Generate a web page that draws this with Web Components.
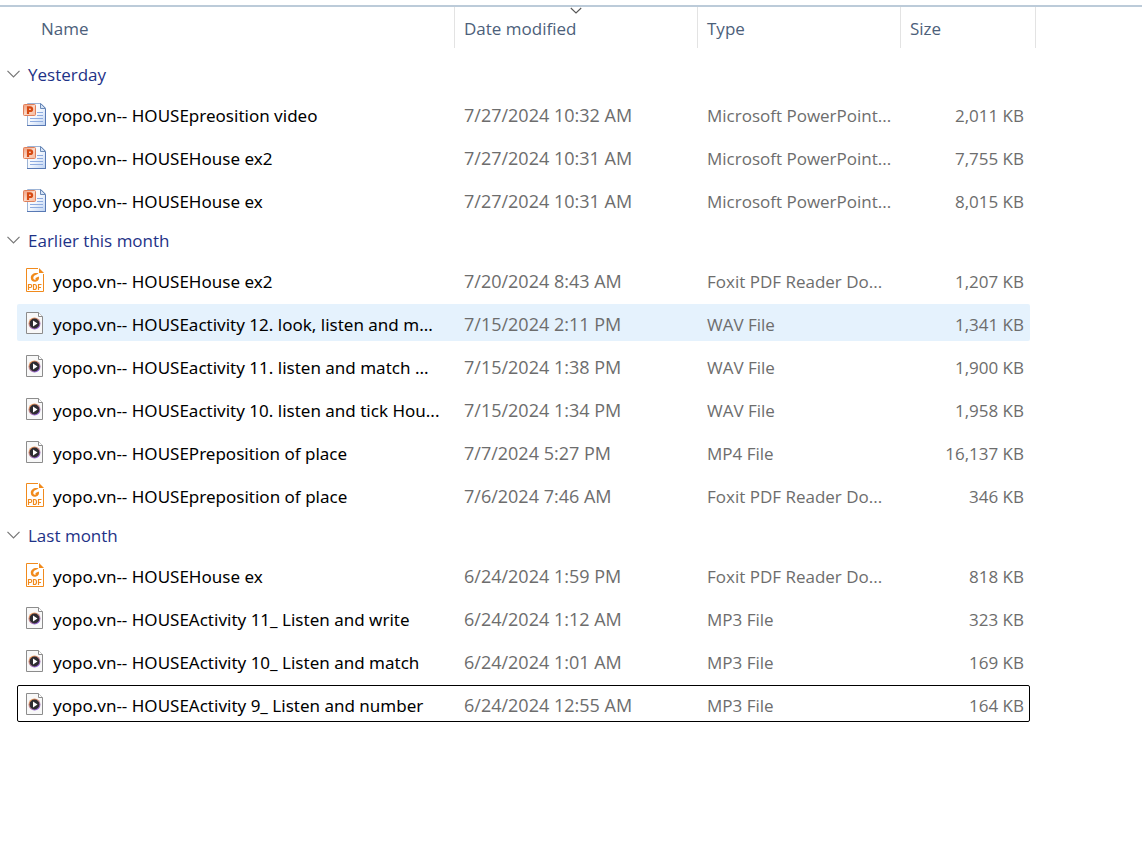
<!DOCTYPE html>
<html lang="en">
<head>
<meta charset="utf-8">
<title>Files</title>
<style>
body { margin: 0; background: #fff; font-family: "Open Sans", "Noto Sans", sans-serif; font-size: 17px; line-height: 24px; color: #000; }
</style>
</head>
<body>
<file-pane><file-list></file-list></file-pane>

<template id="icon-ppt">
  <svg viewBox="0 0 24 24" width="24" height="24" aria-hidden="true">
    <defs>
      <linearGradient id="sheet" x1="0" y1="0" x2="1" y2="1"><stop offset="0" stop-color="#fff"/><stop offset=".5" stop-color="#f4f8fe"/><stop offset="1" stop-color="#bdd2f2"/></linearGradient>
      <linearGradient id="badge" x1="0" y1="0" x2="1" y2="1"><stop offset="0" stop-color="#ef9a78"/><stop offset=".5" stop-color="#fbd9c8"/><stop offset="1" stop-color="#f6b698"/></linearGradient>
    </defs>
    <g transform="translate(0 1)">
      <path d="M4.500 .5H18L22.500 5V22.500H4.500Z" fill="url(#sheet)" stroke="#9db4d6"/>
      <path d="M17.500 .5V5.500H22.500Z" fill="#d5e3f6" stroke="#6b8ab8"/>
      <path d="M14 9.500H20M14 12.500H20M7 15.500H20M7 18.500H20" stroke="#8eabdf"/>
      <path d="M4 22.500H23M22.500 6V22" stroke="#5879b4"/>
      <rect x=".5" y="1.500" width="12" height="11" rx="1" fill="url(#badge)" stroke="#e0805a"/>
      <path d="M5 11V4.300H7C9.800 4.300 9.800 8 7 8H5" fill="none" stroke="#d64a12" stroke-width="2.200"/>
    </g>
  </svg>
</template>
<template id="icon-pdf">
  <svg viewBox="0 0 24 24" width="24" height="24" aria-hidden="true">
    <path d="M15 .5H3.500V23.500H20.500V6" fill="#fff" stroke="#f18a1c"/>
    <path d="M16 0V5H21Z" fill="#f18a1c"/>
    <path d="M15.500 5.200C11 4.200 7.800 6.500 7.800 9.800C7.800 13 10.500 14.500 13.200 13.600C15.600 12.800 16.600 10.500 15.800 8.600L12 10.200C13.200 10.300 13.300 11.600 12 11.700C10 11.900 9.700 8.800 11.600 7.500C12.800 6.700 14.500 6.500 15.500 5.200Z" fill="#f18a1c"/>
    <path d="M5.500 22V16.500H7.500Q8.700 16.500 8.700 18Q8.700 19.500 7.500 19.500H5.500M10.500 16.500V21.500H11.700Q13.500 21.500 13.500 19Q13.500 16.500 11.700 16.500ZM15.500 22V16.500H18.500M15.500 19.500H18" fill="none" stroke="#f18a1c" stroke-width="1.200"/>
  </svg>
</template>
<template id="icon-media">
  <svg viewBox="0 0 24 24" width="24" height="24" aria-hidden="true">
    <defs><linearGradient id="ring" x1="0" y1="0" x2=".6" y2="1"><stop offset="0" stop-color="#ff9b3d"/><stop offset=".5" stop-color="#c98b86"/><stop offset="1" stop-color="#8e62d6"/></linearGradient></defs>
    <path d="M3.500 1.500H15.500L19.500 5.500V22.500H3.500Z" fill="#f8f8f8" stroke="#8c8c8c"/>
    <path d="M15.500 1.500V5.500H19.500" fill="#fff" stroke="#8c8c8c"/>
    <circle cx="11.500" cy="12.500" r="6" fill="url(#ring)"/>
    <circle cx="11.500" cy="12.500" r="4.900" fill="#2d2b31"/>
    <path d="M10 9.500V15.500L14.500 12.500Z" fill="#fff"/>
  </svg>
</template>

<script>
class FilePane extends HTMLElement {
  constructor() {
    super();
    this.attachShadow({ mode: 'open' }).innerHTML = `
      <style>
        :host { display: block; padding-top: 5px; }
        main { border-top: 2px solid #bccbd9; }
      </style>
      <main><slot></slot></main>`;
  }
}

class FileIcon extends HTMLElement {
  connectedCallback() {
    if (this.shadowRoot) return;
    const root = this.attachShadow({ mode: 'open' });
    root.innerHTML = '<style>:host { display: block; flex: none; width: 24px; height: 24px; } svg { display: block; }</style>';
    root.append(document.getElementById('icon-' + this.getAttribute('kind')).content.cloneNode(true));
  }
}

class GroupHeading extends HTMLElement {
  constructor() {
    super();
    this.attachShadow({ mode: 'open' }).innerHTML = `
      <style>
        :host { display: block; }
        button { display: flex; align-items: center; gap: 8px; height: 37px; padding: 0 0 0 7px; border: 0; background: none; font: inherit; color: #1e3287; }
        svg { display: block; }
        span { padding-top: 2px; }
      </style>
      <button type="button" aria-expanded="true">
        <svg width="13" height="8" viewBox="0 0 13 8" aria-hidden="true"><path d="M.5 .8L6.500 6.800L12.500 .8" fill="none" stroke="#777" stroke-width="1.200"/></svg>
        <span><slot></slot></span>
      </button>`;
  }
}

class ColumnHeading extends HTMLElement {
  constructor() {
    super();
    this.attachShadow({ mode: 'open' }).innerHTML = `
      <style>
        :host { display: block; position: relative; }
        button { display: block; width: 100%; height: 41px; padding: 2px 0 0 var(--inset, 9px); border: 0; background: none; font: inherit; color: #4c607a; text-align: left; }
        svg { display: none; position: absolute; top: 0; left: 50%; transform: translateX(-50%); }
        :host([sorted]) svg { display: block; }
      </style>
      <button type="button"><slot></slot></button>
      <svg width="12" height="7" viewBox="0 0 12 7" aria-hidden="true"><path d="M.8 1L6 6L11.200 1" fill="none" stroke="#555" stroke-width="1.100"/></svg>`;
  }
}

const groups = [
  ['Yesterday', [
    ['ppt', 'yopo.vn-- HOUSEpreosition video', '7/27/2024 10:32 AM', 'Microsoft PowerPoint...', '2,011 KB'],
    ['ppt', 'yopo.vn-- HOUSEHouse ex2', '7/27/2024 10:31 AM', 'Microsoft PowerPoint...', '7,755 KB'],
    ['ppt', 'yopo.vn-- HOUSEHouse ex', '7/27/2024 10:31 AM', 'Microsoft PowerPoint...', '8,015 KB']]],
  ['Earlier this month', [
    ['pdf', 'yopo.vn-- HOUSEHouse ex2', '7/20/2024 8:43 AM', 'Foxit PDF Reader Do...', '1,207 KB'],
    ['media', 'yopo.vn-- HOUSEactivity 12. look, listen and m...', '7/15/2024 2:11 PM', 'WAV File', '1,341 KB', 'hover'],
    ['media', 'yopo.vn-- HOUSEactivity 11. listen and match ...', '7/15/2024 1:38 PM', 'WAV File', '1,900 KB'],
    ['media', 'yopo.vn-- HOUSEactivity 10. listen and tick Hou...', '7/15/2024 1:34 PM', 'WAV File', '1,958 KB'],
    ['media', 'yopo.vn-- HOUSEPreposition of place', '7/7/2024 5:27 PM', 'MP4 File', '16,137 KB'],
    ['pdf', 'yopo.vn-- HOUSEpreposition of place', '7/6/2024 7:46 AM', 'Foxit PDF Reader Do...', '346 KB']]],
  ['Last month', [
    ['pdf', 'yopo.vn-- HOUSEHouse ex', '6/24/2024 1:59 PM', 'Foxit PDF Reader Do...', '818 KB'],
    ['media', 'yopo.vn-- HOUSEActivity 11_ Listen and write', '6/24/2024 1:12 AM', 'MP3 File', '323 KB'],
    ['media', 'yopo.vn-- HOUSEActivity 10_ Listen and match', '6/24/2024 1:01 AM', 'MP3 File', '169 KB'],
    ['media', 'yopo.vn-- HOUSEActivity 9_ Listen and number', '6/24/2024 12:55 AM', 'MP3 File', '164 KB', 'focus']]]
];

class FileList extends HTMLElement {
  constructor() {
    super();
    const row = ([kind, name, date, type, size, state = '']) => `
      <tr class="file ${state}">
        <td class="name"><file-icon kind="${kind}"></file-icon><span>${name}</span></td>
        <td class="date">${date}</td><td>${type}</td><td class="size">${size}</td>
      </tr>`;
    this.attachShadow({ mode: 'open' }).innerHTML = `
      <style>
        :host { display: block; padding-right: 106px; }
        table, thead, tbody { display: block; }
        th, td { display: block; padding: 0; min-width: 0; font-weight: 400; text-align: left; white-space: nowrap; }
        tr { display: grid; }
        thead tr { grid-template-columns: minmax(0, 1fr) 243px 203px 135px; margin-bottom: 7px; }
        thead th { border-right: 1px solid #e3e3e3; }
        .first { --inset: 41px; }
        .file { grid-template-columns: minmax(0, 1fr) 243px 203px 129px; height: 37px; margin: 3px 6px 6px 17px; border-radius: 2px; }
        .file:last-child { margin-bottom: 3px; }
        .file + .file { margin-top: 0; }
        .file td { padding: 9px 0 0 9px; box-sizing: border-box; color: #6d6d6d; overflow: hidden; }
        .file td.name { display: flex; gap: 6px; padding: 7px 0 0 6px; color: #000; font-family: "Noto Sans", sans-serif; }
        .name span { padding-top: 2px; }
        .file td.date { padding-top: 8px; font-size: 18px; }
        .file td.size { padding-right: 6px; text-align: right; }
        .hover { background: #e5f2fd; }
        .focus { outline: 1px solid #000; outline-offset: -1px; }
      </style>
      <table>
        <thead><tr>
          <th scope="col" class="first"><column-heading>Name</column-heading></th>
          <th scope="col" aria-sort="descending"><column-heading sorted>Date modified</column-heading></th>
          <th scope="col"><column-heading>Type</column-heading></th>
          <th scope="col"><column-heading>Size</column-heading></th>
        </tr></thead>
        ${groups.map(([title, files]) => `<tbody>
          <tr class="group"><th colspan="4" scope="rowgroup"><group-heading>${title}</group-heading></th></tr>
          ${files.map(row).join('')}</tbody>`).join('')}
      </table>`;
  }
}

customElements.define('file-icon', FileIcon);
customElements.define('group-heading', GroupHeading);
customElements.define('column-heading', ColumnHeading);
customElements.define('file-list', FileList);
customElements.define('file-pane', FilePane);
</script>
</body>
</html>
